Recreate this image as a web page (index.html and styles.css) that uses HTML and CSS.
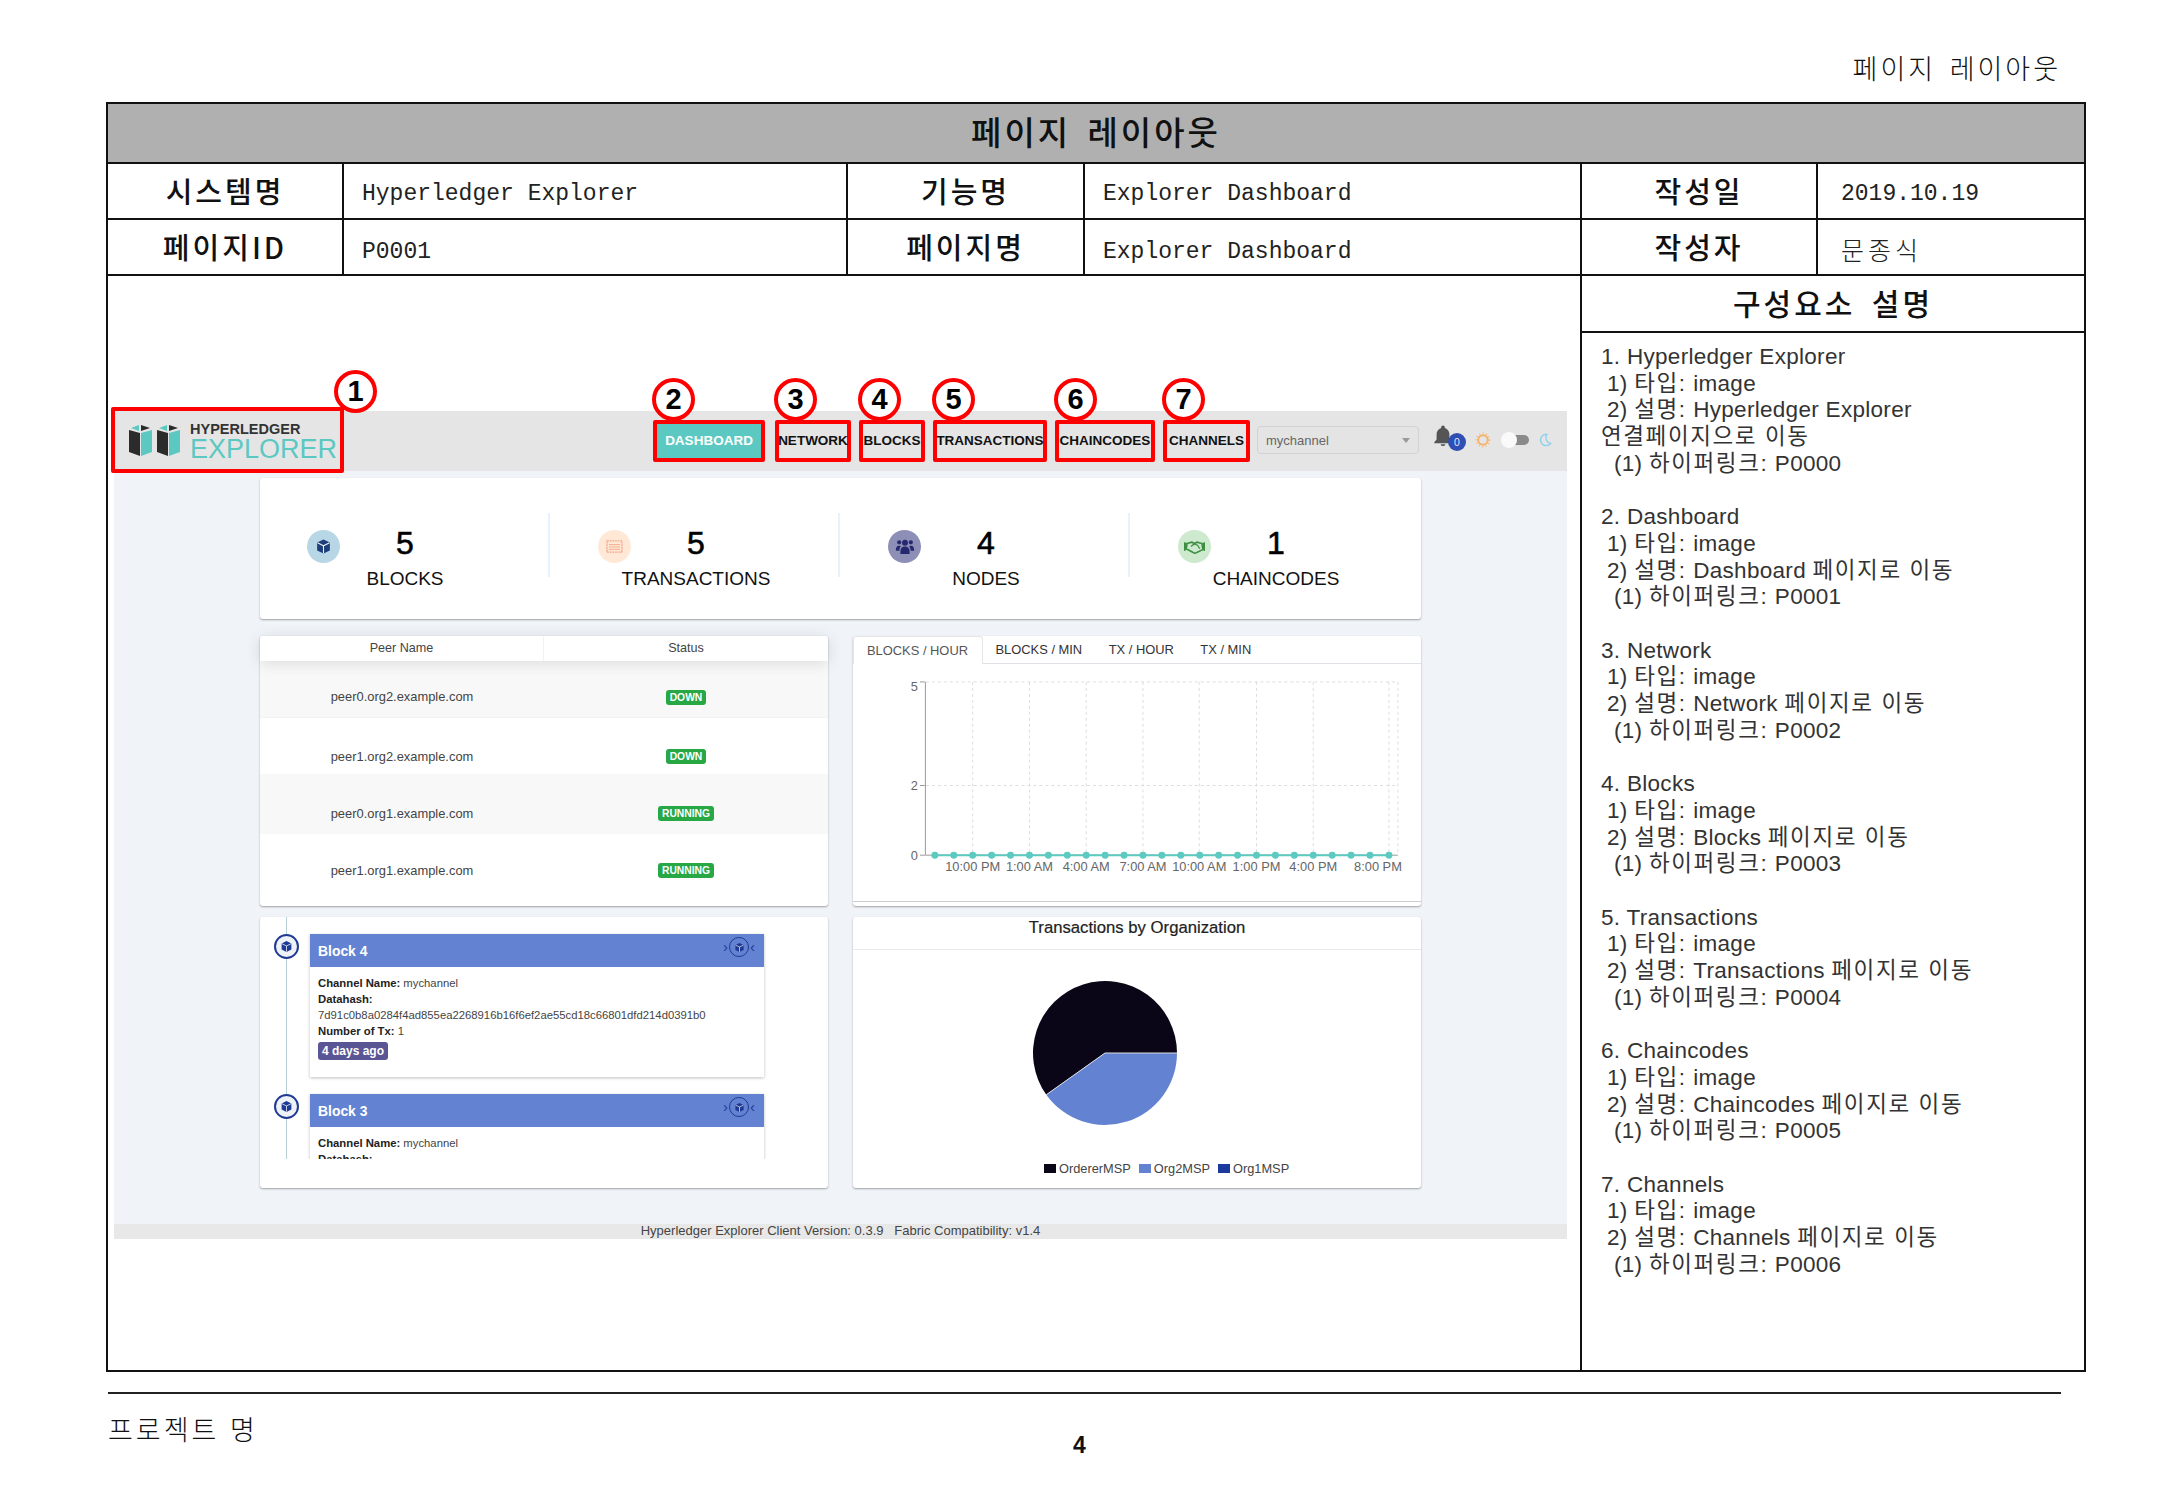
FILE: index.html
```html
<!DOCTYPE html>
<html lang="ko">
<head>
    <meta charset="UTF-8">
    <title>페이지 레이아웃</title>
    <link rel="stylesheet" href="styles.css">
</head>
<body>

<svg class="defs" width="0" height="0">
    <symbol id="cube" viewBox="0 0 24 24">
        <path d="M12 2 3 6.5v11L12 22l9-4.5v-11z" fill="currentColor"/>
        <path d="M3.5 6.8 12 11l8.500-4.200M12 11v10.500" fill="none" stroke="#e8f0f6" stroke-width="1.500"/>
    </symbol>
</svg>

<div class="page">
    <div class="doc-label">페이지 레이아웃</div>

    <div class="sheet">
        <div class="sheet-title">페이지 레이아웃</div>

        <!-- Document info -->
        <div class="info">
            <div class="cell head">시스템명</div>
            <div class="cell value">Hyperledger Explorer</div>
            <div class="cell head">기능명</div>
            <div class="cell value">Explorer Dashboard</div>
            <div class="cell head">작성일</div>
            <div class="cell value date">2019.10.19</div>
            <div class="cell head">페이지ID</div>
            <div class="cell value low">P0001</div>
            <div class="cell head">페이지명</div>
            <div class="cell value low">Explorer Dashboard</div>
            <div class="cell head">작성자</div>
            <div class="cell value author">문종식</div>
        </div>

        <div class="sheet-body">
            <div class="shot-area">
                <div class="shot">

                    <!-- Explorer navbar -->
                    <div class="navbar">
                        <div class="brand marked">
                            <span class="num num-brand">1</span>
                            <svg class="brand-icon" viewBox="0 0 52 32">
                                <polygon points="0,6 11,9 11,32 0,28" fill="#2b2b2b"/>
                                <polygon points="12,9 23,6 23,28 12,32" fill="#5cc8c2"/>
                                <polygon points="2,4 10,1 10,7" fill="#5cc8c2"/>
                                <polygon points="12,1 21,4 12,7" fill="#2b2b2b"/>
                                <polygon points="28,6 39,9 39,32 28,28" fill="#2b2b2b"/>
                                <polygon points="40,9 51,6 51,28 40,32" fill="#5cc8c2"/>
                                <polygon points="30,4 38,1 38,7" fill="#5cc8c2"/>
                                <polygon points="40,1 49,4 40,7" fill="#2b2b2b"/>
                            </svg>
                            <div class="brand-text">
                                <div class="brand-top">HYPERLEDGER</div>
                                <div class="brand-bottom">EXPLORER</div>
                            </div>
                        </div>

                        <div class="nav-item marked nav-active"><span class="num">2</span>DASHBOARD</div>
                        <div class="nav-item marked nav-network"><span class="num">3</span>NETWORK</div>
                        <div class="nav-item marked nav-blocks"><span class="num">4</span>BLOCKS</div>
                        <div class="nav-item marked nav-tx"><span class="num">5</span>TRANSACTIONS</div>
                        <div class="nav-item marked nav-code"><span class="num">6</span>CHAINCODES</div>
                        <div class="nav-item marked nav-chan"><span class="num">7</span>CHANNELS</div>

                        <div class="channel-select">mychannel<span class="caret"></span></div>

                        <div class="nav-tools">
                            <div class="bell">
                                <svg viewBox="0 0 24 24" width="22" height="22"><path d="M12 1.500a2 2 0 0 0-2 2v.800C6.800 5.200 5 8 5 11.500V17l-2.500 3v1h19v-1L19 17v-5.500c0-3.500-1.800-6.300-5-7.200v-.800a2 2 0 0 0-2-2zM9.500 22a2.500 2 0 0 0 5 0z" fill="#555"/></svg>
                                <span class="bell-count">0</span>
                            </div>
                            <svg class="sun" viewBox="0 0 16 16" width="16" height="16"><circle cx="8" cy="8" r="4.800" fill="none" stroke="#f6b26b" stroke-width="2"/><circle cx="8" cy="8" r="6.800" fill="none" stroke="#f6b26b" stroke-width="1.300" stroke-dasharray="1 2.500"/></svg>
                            <div class="toggle"><span class="toggle-knob"></span></div>
                            <svg class="moon" viewBox="0 0 16 16" width="14" height="16"><path d="M10 1.500a6.500 6.500 0 1 0 4.500 10.500A7 7 0 0 1 10 1.500z" fill="none" stroke="#8fd0ee" stroke-width="1.500"/></svg>
                        </div>
                    </div>

                    <div class="main">
                        <!-- Stats -->
                        <div class="card stats">
                            <div class="stat">
                                <span class="stat-icon icon-blocks"><svg class="ico-blocks" width="17" height="17"><use href="#cube"/></svg></span>
                                <div class="stat-text"><div class="stat-num">5</div><div class="stat-label">BLOCKS</div></div>
                            </div>
                            <div class="stat">
                                <span class="stat-icon icon-tx">
                                    <svg viewBox="0 0 18 16" width="17" height="15"><rect x="1" y="2" width="16" height="12" fill="none" stroke="#f3a78d" stroke-width="1.500" stroke-dasharray="2 .8"/><path d="M3 6h12M3 8.500h12M3 11h12" stroke="#f3a78d"/></svg>
                                </span>
                                <div class="stat-text"><div class="stat-num">5</div><div class="stat-label">TRANSACTIONS</div></div>
                            </div>
                            <div class="stat">
                                <span class="stat-icon icon-nodes">
                                    <svg viewBox="0 0 24 20" width="20" height="17" fill="#25286e"><circle cx="5" cy="5" r="2.500"/><circle cx="19" cy="5" r="2.500"/><circle cx="12" cy="5.500" r="3.500"/><path d="M1 15c0-4 1-6 4-6 1 0 1.500.3 2 .6C5.800 11 5.300 13 5.300 15zM23 15c0-4-1-6-4-6-1 0-1.500.3-2 .6 1.200 1.400 1.700 3.400 1.700 5.400zM6.500 19v-3c0-4 2-6 5.500-6s5.500 2 5.500 6v3z"/></svg>
                                </span>
                                <div class="stat-text"><div class="stat-num">4</div><div class="stat-label">NODES</div></div>
                            </div>
                            <div class="stat last">
                                <span class="stat-icon icon-code">
                                    <svg viewBox="0 0 24 16" width="21" height="14"><path d="M0 2.500l3 .5-1 9-2 .5zM24 2.500l-3 .5 1 9 2 .5z" fill="#3e8e41"/><path d="M3.500 4 9 2.500l3 1.500 3-1.500L20.500 4l1 7-7.500 3.500-2 .5-2-1-7.500-4z" fill="none" stroke="#3e8e41" stroke-width="1.800"/><path d="M8 7.500l3.500-3 4 1.500 2.500 4" fill="none" stroke="#3e8e41" stroke-width="1.500"/></svg>
                                </span>
                                <div class="stat-text"><div class="stat-num">1</div><div class="stat-label">CHAINCODES</div></div>
                            </div>
                        </div>

                        <div class="panels">
                            <!-- Peers -->
                            <div class="card peers">
                                <div class="peer-head">
                                    <div class="peer-col name">Peer Name</div>
                                    <div>Status</div>
                                </div>
                                <div class="peer-row row-a">
                                    <div>peer0.org2.example.com</div>
                                    <div><span class="status status-down">DOWN</span></div>
                                </div>
                                <div class="peer-row row-b">
                                    <div>peer1.org2.example.com</div>
                                    <div><span class="status status-down">DOWN</span></div>
                                </div>
                                <div class="peer-row row-c">
                                    <div>peer0.org1.example.com</div>
                                    <div><span class="status status-run">RUNNING</span></div>
                                </div>
                                <div class="peer-row row-d">
                                    <div>peer1.org1.example.com</div>
                                    <div><span class="status status-run">RUNNING</span></div>
                                </div>
                            </div>

                            <!-- Metrics chart -->
                            <div class="card chart-card">
                                <div class="tabs">
                                    <div class="tab tab-on">BLOCKS / HOUR</div>
                                    <div class="tab">BLOCKS / MIN</div>
                                    <div class="tab">TX / HOUR</div>
                                    <div class="tab">TX / MIN</div>
                                </div>
                                <svg class="chart" id="chart" width="568" height="238" viewBox="0 0 568 238"></svg>
                            </div>

                            <!-- Block timeline -->
                            <div class="card timeline-card">
                                <div class="timeline">
                                    <div class="block">
                                        <span class="block-dot"><svg class="ico-dark" width="13" height="13"><use href="#cube"/></svg></span>
                                        <div class="block-head">Block 4
                                            <span class="block-mark"><i class="chev">›</i><span class="mark-ring"><svg class="ico-dark" width="11" height="11"><use href="#cube"/></svg></span><i class="chev">‹</i></span>
                                        </div>
                                        <div class="block-body">
                                            <div><b>Channel Name:</b> mychannel</div>
                                            <div><b>Datahash:</b></div>
                                            <div>7d91c0b8a0284f4ad855ea2268916b16f6ef2ae55cd18c66801dfd214d0391b0</div>
                                            <div><b>Number of Tx:</b> 1</div>
                                            <span class="age">4 days ago</span>
                                        </div>
                                    </div>
                                    <div class="block">
                                        <span class="block-dot"><svg class="ico-dark" width="13" height="13"><use href="#cube"/></svg></span>
                                        <div class="block-head">Block 3
                                            <span class="block-mark"><i class="chev">›</i><span class="mark-ring"><svg class="ico-dark" width="11" height="11"><use href="#cube"/></svg></span><i class="chev">‹</i></span>
                                        </div>
                                        <div class="block-body">
                                            <div><b>Channel Name:</b> mychannel</div>
                                            <div><b>Datahash:</b></div>
                                        </div>
                                    </div>
                                </div>
                            </div>

                            <!-- Pie -->
                            <div class="card pie-card">
                                <div class="pie-title">Transactions by Organization</div>
                                <svg class="pie" width="568" height="207" viewBox="0 0 568 207">
                                    <path d="M252 103 L324 103 A72 72 0 1 0 193.300 144.700 Z" fill="#0a0618"/>
                                    <path d="M252 103 L324 103 A72 72 0 0 1 193.300 144.700 Z" fill="#6383d2"/>
                                    <path d="M324 103 L252 103 L193.300 144.700" fill="none" stroke="#ddd" stroke-width="1"/>
                                </svg>
                                <div class="legend">
                                    <span class="swatch sw-a"></span><span>OrdererMSP</span>
                                    <span class="swatch sw-b"></span><span>Org2MSP</span>
                                    <span class="swatch sw-c"></span><span>Org1MSP</span>
                                </div>
                            </div>
                        </div>
                    </div>

                    <div class="shot-footer">Hyperledger Explorer Client Version: 0.3.9 &nbsp; Fabric Compatibility: v1.4</div>
                </div>
            </div>

            <!-- Component notes -->
            <div class="notes">
                <div class="notes-title">구성요소 설명</div>
                <div class="notes-list">
                    <div class="note">
                        <div>1. Hyperledger Explorer</div>
                        <div class="l2">1) <span class="ko">타입:</span> image</div>
                        <div class="l2">2) <span class="ko">설명:</span> Hyperledger Explorer</div>
                        <div><span class="ko">연결페이지으로 이동</span></div>
                        <div class="l3">(1) <span class="ko">하이퍼링크:</span> P0000</div>
                    </div>
                    <div class="note">
                        <div>2. Dashboard</div>
                        <div class="l2">1) <span class="ko">타입:</span> image</div>
                        <div class="l2">2) <span class="ko">설명:</span> Dashboard <span class="ko">페이지로 이동</span></div>
                        <div class="l3">(1) <span class="ko">하이퍼링크:</span> P0001</div>
                    </div>
                    <div class="note">
                        <div>3. Network</div>
                        <div class="l2">1) <span class="ko">타입:</span> image</div>
                        <div class="l2">2) <span class="ko">설명:</span> Network <span class="ko">페이지로 이동</span></div>
                        <div class="l3">(1) <span class="ko">하이퍼링크:</span> P0002</div>
                    </div>
                    <div class="note">
                        <div>4. Blocks</div>
                        <div class="l2">1) <span class="ko">타입:</span> image</div>
                        <div class="l2">2) <span class="ko">설명:</span> Blocks <span class="ko">페이지로 이동</span></div>
                        <div class="l3">(1) <span class="ko">하이퍼링크:</span> P0003</div>
                    </div>
                    <div class="note">
                        <div>5. Transactions</div>
                        <div class="l2">1) <span class="ko">타입:</span> image</div>
                        <div class="l2">2) <span class="ko">설명:</span> Transactions <span class="ko">페이지로 이동</span></div>
                        <div class="l3">(1) <span class="ko">하이퍼링크:</span> P0004</div>
                    </div>
                    <div class="note">
                        <div>6. Chaincodes</div>
                        <div class="l2">1) <span class="ko">타입:</span> image</div>
                        <div class="l2">2) <span class="ko">설명:</span> Chaincodes <span class="ko">페이지로 이동</span></div>
                        <div class="l3">(1) <span class="ko">하이퍼링크:</span> P0005</div>
                    </div>
                    <div class="note">
                        <div>7. Channels</div>
                        <div class="l2">1) <span class="ko">타입:</span> image</div>
                        <div class="l2">2) <span class="ko">설명:</span> Channels <span class="ko">페이지로 이동</span></div>
                        <div class="l3">(1) <span class="ko">하이퍼링크:</span> P0006</div>
                    </div>
                </div>
            </div>
        </div>
    </div>

    <div class="doc-footer">
        <div class="project">프로젝트 명</div>
        <div class="page-no">4</div>
    </div>
</div>

<script>
    // Draw the blocks / hour line chart
    var svgNS = 'http://www.w3.org/2000/svg';
    var chart = document.getElementById('chart');

    function add(tag, attrs, text) {
        var el = document.createElementNS(svgNS, tag);
        for (var k in attrs) el.setAttribute(k, attrs[k]);
        if (text) el.textContent = text;
        chart.appendChild(el);
    }

    var gridX = [119, 176, 233, 290, 346.5, 404, 461, 537, 546];
    gridX.forEach(function (x) {
        add('line', { x1: x, x2: x, y1: 18, y2: 192, stroke: '#ddd', 'stroke-dasharray': '3 3' });
    });
    [18, 122].forEach(function (y) {
        add('line', { x1: 72, x2: 546, y1: y, y2: y, stroke: '#ddd', 'stroke-dasharray': '3 3' });
    });

    add('line', { x1: 71.5, x2: 71.5, y1: 18, y2: 192, stroke: '#999' });
    add('line', { x1: 71.5, x2: 546, y1: 192, y2: 192, stroke: '#999' });

    [[5, 18, 22], [2, 122, 122], [0, 192, 192]].forEach(function (t) {
        add('line', { x1: 66, x2: 71, y1: t[1], y2: t[1], stroke: '#999' });
        add('text', { x: 64, y: t[2] + 5, 'text-anchor': 'end', class: 'tick' }, String(t[0]));
    });

    add('line', { x1: 81, x2: 537, y1: 192, y2: 192, stroke: '#5ccac0', 'stroke-width': 2 });
    for (var i = 0; i < 25; i++) {
        add('circle', { cx: 81 + i * 19, cy: 192, r: 3.5, fill: '#5ccac0' });
    }

    var labels = [[119, '10:00 PM'], [176, '1:00 AM'], [233, '4:00 AM'], [290, '7:00 AM'],
        [346.5, '10:00 AM'], [404, '1:00 PM'], [461, '4:00 PM'], [526, '8:00 PM']];
    labels.forEach(function (l) {
        add('text', { x: l[0], y: 208, 'text-anchor': 'middle', class: 'tick' }, l[1]);
    });
</script>

</body>
</html>
```

FILE: styles.css
```css
/* Reset */
* {
    margin: 0;
    padding: 0;
    box-sizing: border-box;
}

body {
    background: #fff;
    color: #111;
    font-family: "Liberation Sans", "Noto Sans CJK KR", sans-serif;
}

.defs {
    position: absolute;
}

.page {
    width: 2167px;
    height: 1500px;
    padding-left: 106px;
    overflow: hidden;
}

/* Document frame */
.doc-label {
    width: 1980px;
    height: 102px;
    padding-right: 25px;
    text-align: right;
    line-height: 136px;
    font-family: "Noto Sans CJK KR", sans-serif;
    font-size: 27px;
    font-weight: 300;
    letter-spacing: 3px;
    word-spacing: 3px;
}

.sheet {
    width: 1980px;
    height: 1270px;
    border: 2px solid #111;
}

.sheet-title {
    height: 60px;
    background: #b0b0b0;
    border-bottom: 2px solid #111;
    text-align: center;
    line-height: 55px;
    font-family: "Noto Sans CJK KR", sans-serif;
    font-size: 33px;
    font-weight: 500;
    letter-spacing: 3px;
    word-spacing: 4px;
}

.info {
    display: grid;
    grid-template-columns: 236px 504px 237px 497px 236px 266px;
    grid-auto-rows: 56px;
}

.cell {
    display: flex;
    align-items: center;
    border-right: 2px solid #111;
    border-bottom: 2px solid #111;
}

.cell:nth-child(6n) {
    border-right: none;
}

.head {
    justify-content: center;
    padding-bottom: 2px;
    font-family: "Noto Sans CJK KR", sans-serif;
    font-size: 29px;
    font-weight: 500;
    letter-spacing: 3px;
}

.value {
    padding: 5px 0 0 18px;
    font-family: "Liberation Mono", monospace;
    font-size: 23px;
    color: #222;
}

.value.low {
    padding-top: 9px;
}

.value.date {
    padding-left: 23px;
}

.value.author {
    padding: 3px 0 0 23px;
    font-family: "Noto Sans CJK KR", sans-serif;
    font-size: 25px;
    font-weight: 300;
    letter-spacing: 4px;
}

.sheet-body {
    display: grid;
    grid-template-columns: 1474px 502px;
    height: 1094px;
}

.shot-area {
    padding: 135px 0 0 6px;
    border-right: 2px solid #111;
}

/* Embedded explorer screenshot */
.shot {
    width: 1453px;
}

.navbar {
    display: flex;
    height: 60px;
    background: #e5e5e5;
    font-size: 13.5px;
}

.marked {
    position: relative;
    border: 4px solid #f00;
    border-radius: 2px;
}

.num {
    position: absolute;
    left: -5px;
    top: -46px;
    width: 43px;
    height: 43px;
    background: #fff;
    border: 4px solid #f00;
    border-radius: 50%;
    text-align: center;
    line-height: 34px;
    font-size: 29px;
    font-weight: bold;
    color: #000;
}

.num-brand {
    left: 219px;
    top: -41px;
}

.brand {
    display: flex;
    align-items: flex-start;
    gap: 9px;
    width: 233px;
    height: 66px;
    margin: -4px 309px 0 -3px;
    padding: 12px 0 0 14px;
}

.brand-icon {
    width: 52px;
    height: 34px;
}

.brand-top {
    font-size: 14.5px;
    font-weight: bold;
    line-height: 13px;
    color: #333;
}

.brand-bottom {
    margin-top: 1px;
    font-size: 27px;
    line-height: 24px;
    color: #5cc8c2;
}

.nav-item {
    display: flex;
    align-items: center;
    justify-content: center;
    height: 42px;
    margin: 9px 8px 0 0;
    padding-bottom: 2px;
    font-weight: bold;
    color: #111;
    white-space: nowrap;
}

.nav-active {
    width: 112px;
    margin-right: 10px;
    background: #5bc8c2;
    color: #fff;
}

.nav-network { width: 76px; }
.nav-blocks { width: 66px; }
.nav-tx { width: 114px; }
.nav-code { width: 100px; }
.nav-chan { width: 87px; margin-right: 7px; }

.channel-select {
    position: relative;
    width: 162px;
    height: 28px;
    margin-top: 15px;
    padding-left: 8px;
    background: #e4e4e4;
    border: 1px solid #d2d2d2;
    border-radius: 4px;
    line-height: 28px;
    font-size: 13px;
    color: #666;
}

.caret {
    position: absolute;
    right: 8px;
    top: 11px;
    border: 4px solid transparent;
    border-top: 5px solid #999;
}

.nav-tools {
    display: flex;
    align-items: center;
    height: 30px;
    margin: 14px 0 0 13px;
}

.bell {
    position: relative;
    width: 22px;
    height: 22px;
    margin-top: -10px;
}

.bell-count {
    position: absolute;
    left: 16px;
    top: 9px;
    width: 18px;
    height: 18px;
    background: #2f4fb5;
    border-radius: 50%;
    text-align: center;
    line-height: 18px;
    font-size: 10.5px;
    color: #dfe6ff;
}

.sun {
    margin-left: 21px;
}

.toggle {
    position: relative;
    width: 27px;
    height: 10px;
    margin-left: 11px;
    background: #8a8a8a;
    border-radius: 5px;
}

.toggle-knob {
    position: absolute;
    left: -1px;
    top: -3px;
    width: 16px;
    height: 16px;
    background: #fafafa;
    border-radius: 50%;
}

.moon {
    margin-left: 9px;
}

.main {
    height: 753px;
    padding: 7px 0 0 146px;
    background: #f0f4f9;
}

.card {
    background: #fff;
    border-radius: 3px;
    box-shadow: 0 1px 2px rgba(0, 0, 0, 0.35);
}

.ico-blocks {
    color: #1f3f7a;
}

.ico-dark {
    color: #1f3a93;
}

/* Stats row */
.stats {
    display: grid;
    grid-template-columns: repeat(4, 290px);
    width: 1161px;
    height: 141px;
    padding-top: 35px;
}

.stat {
    display: flex;
    height: 64px;
    padding-left: 47px;
    border-right: 2px solid #e6f3ff;
}

.stat + .stat {
    padding-left: 48px;
}

.stat.last {
    border-right: none;
}

.stat-icon {
    display: flex;
    align-items: center;
    justify-content: center;
    width: 33px;
    height: 33px;
    margin-top: 17px;
    border-radius: 50%;
}

.icon-blocks { background: #b7d7e6; }
.icon-tx { background: #ffe9d6; }
.icon-nodes { background: #8e8fb6; }
.icon-code { background: #cdeacf; }

.stat-text {
    display: flex;
    flex-direction: column;
    align-items: center;
    width: 130px;
}

.stat + .stat .stat-text {
    width: 130px;
}

.stat-num {
    height: 50px;
    line-height: 60px;
    font-size: 32px;
    -webkit-text-stroke: 0.6px #000;
    color: #000;
}

.stat-label {
    margin-top: 4px;
    line-height: 24px;
    font-size: 19px;
    white-space: nowrap;
}

.panels {
    display: grid;
    grid-template-columns: 568px 568px;
    grid-template-rows: 270px 271px;
    column-gap: 25px;
    row-gap: 11px;
    margin-top: 17px;
}

/* Peer table */
.peer-head,
.peer-row {
    display: grid;
    grid-template-columns: 284px 284px;
    text-align: center;
}

.peer-head {
    position: relative;
    height: 25px;
    line-height: 25px;
    font-size: 12.6px;
    color: #444;
    box-shadow: 0 2px 15px rgba(0, 0, 0, 0.12);
}

.peer-col.name {
    border-right: 1px solid #f2f2f2;
}

.peer-row {
    align-items: start;
    line-height: 15px;
    font-size: 12.9px;
    color: #444;
}

.row-a { height: 57px; padding-top: 28px; background: #f8f8f8; border-bottom: 1px solid #f2f2f2; }
.row-b { height: 56px; padding-top: 31px; }
.row-c { height: 60px; padding-top: 32px; background: #f8f8f8; }
.row-d { height: 72px; padding-top: 29px; }

.row-a .status {
    margin-top: 1px;
}

.status {
    display: inline-block;
    height: 15px;
    padding: 0 4px;
    background: #28a745;
    border-radius: 3px;
    line-height: 15px;
    font-size: 10.3px;
    font-weight: bold;
    color: #fff;
    vertical-align: top;
}

/* Chart */
.tabs {
    display: flex;
    height: 28px;
    border-bottom: 1px solid #dee2e6;
    line-height: 27px;
    font-size: 12.9px;
    color: #333;
}

.tab {
    padding: 0 13.5px 0 13px;
    white-space: nowrap;
}

.tab-on {
    height: 28px;
    background: #fff;
    border: 1px solid #e6e6e6;
    border-bottom: none;
    border-radius: 3px 3px 0 0;
    color: #555;
}

.chart {
    display: block;
    border-bottom: 1px solid #ccc;
}

.tick {
    font-size: 12.9px;
    fill: #666;
}

/* Block timeline */
.timeline {
    position: relative;
    height: 242px;
    padding: 17px 0 0 50px;
    overflow: hidden;
}

.timeline::before {
    content: "";
    position: absolute;
    left: 26px;
    top: 0;
    bottom: 0;
    width: 1px;
    background: #b9cdd6;
}

.block {
    position: relative;
    width: 454px;
    height: 143px;
    margin-bottom: 17px;
    background: #fff;
    box-shadow: 0 1px 3px rgba(0, 0, 0, 0.25);
}

.block-dot {
    position: absolute;
    left: -36px;
    top: 0;
    display: flex;
    align-items: center;
    justify-content: center;
    width: 25px;
    height: 25px;
    background: #eef2f8;
    border: 2px solid #1f3a93;
    border-radius: 50%;
}

.block-head {
    position: relative;
    height: 33px;
    padding-left: 8px;
    background: #6383d2;
    line-height: 34px;
    font-size: 13.9px;
    font-weight: bold;
    color: #fff;
}

.block-mark {
    position: absolute;
    right: 9px;
    top: 3px;
    display: flex;
    align-items: center;
    gap: 1px;
    line-height: 20px;
    font-weight: normal;
    color: #1f3a93;
}

.chev {
    font-style: normal;
    font-size: 15px;
}

.mark-ring {
    display: flex;
    align-items: center;
    justify-content: center;
    width: 20px;
    height: 20px;
    border: 1.5px solid #1f3a93;
    border-radius: 50%;
}

.block-body {
    padding: 8px 8px 0;
    line-height: 16px;
    font-size: 11.3px;
    color: #444;
}

.block-body b {
    color: #222;
}

.age {
    display: inline-block;
    height: 18px;
    margin-top: 3px;
    padding: 0 4px;
    background: #5a5594;
    border-radius: 3px;
    line-height: 18px;
    font-size: 12px;
    font-weight: bold;
    color: #fff;
}

/* Pie */
.pie-title {
    height: 33px;
    border-bottom: 1px solid #e9e9e9;
    text-align: center;
    line-height: 22px;
    font-size: 16.7px;
    color: #222;
    -webkit-text-stroke: 0.2px #222;
}

.pie {
    display: block;
}

.legend {
    display: flex;
    align-items: center;
    height: 23px;
    padding-left: 191px;
    font-size: 12.8px;
    color: #444;
}

.swatch {
    width: 12px;
    height: 9px;
    margin-right: 3px;
}

.legend span:not(.swatch) {
    margin-right: 8px;
}

.sw-a { background: #0a0618; }
.sw-b { background: #6383d2; }
.sw-c { background: #1c3a9e; }

.shot-footer {
    height: 15px;
    background: #e8e8e8;
    text-align: center;
    line-height: 14px;
    font-size: 13px;
    color: #444;
}

/* Right hand notes */
.notes-title {
    height: 57px;
    border-bottom: 2px solid #111;
    text-align: center;
    line-height: 52px;
    font-family: "Noto Sans CJK KR", sans-serif;
    font-size: 30px;
    font-weight: 500;
    letter-spacing: 3px;
    word-spacing: 5px;
}

.notes-list {
    padding: 11px 0 0 19px;
    line-height: 26.7px;
    font-size: 22.5px;
    letter-spacing: 0.3px;
    color: #333;
}

.ko {
    letter-spacing: 1.6px;
}

.note {
    margin-bottom: 26.7px;
}

.l2 {
    padding-left: 6px;
}

.l3 {
    padding-left: 13px;
}

/* Bottom of the sheet */
.doc-footer {
    position: relative;
    width: 1953px;
    margin: 20px 0 0 2px;
    border-top: 2px solid #222;
}

.project {
    margin-top: 15px;
    font-family: "Noto Sans CJK KR", sans-serif;
    font-size: 27px;
    font-weight: 300;
    letter-spacing: 3px;
}

.page-no {
    position: absolute;
    left: 965px;
    top: 38px;
    font-size: 23px;
    font-weight: bold;
}
```
